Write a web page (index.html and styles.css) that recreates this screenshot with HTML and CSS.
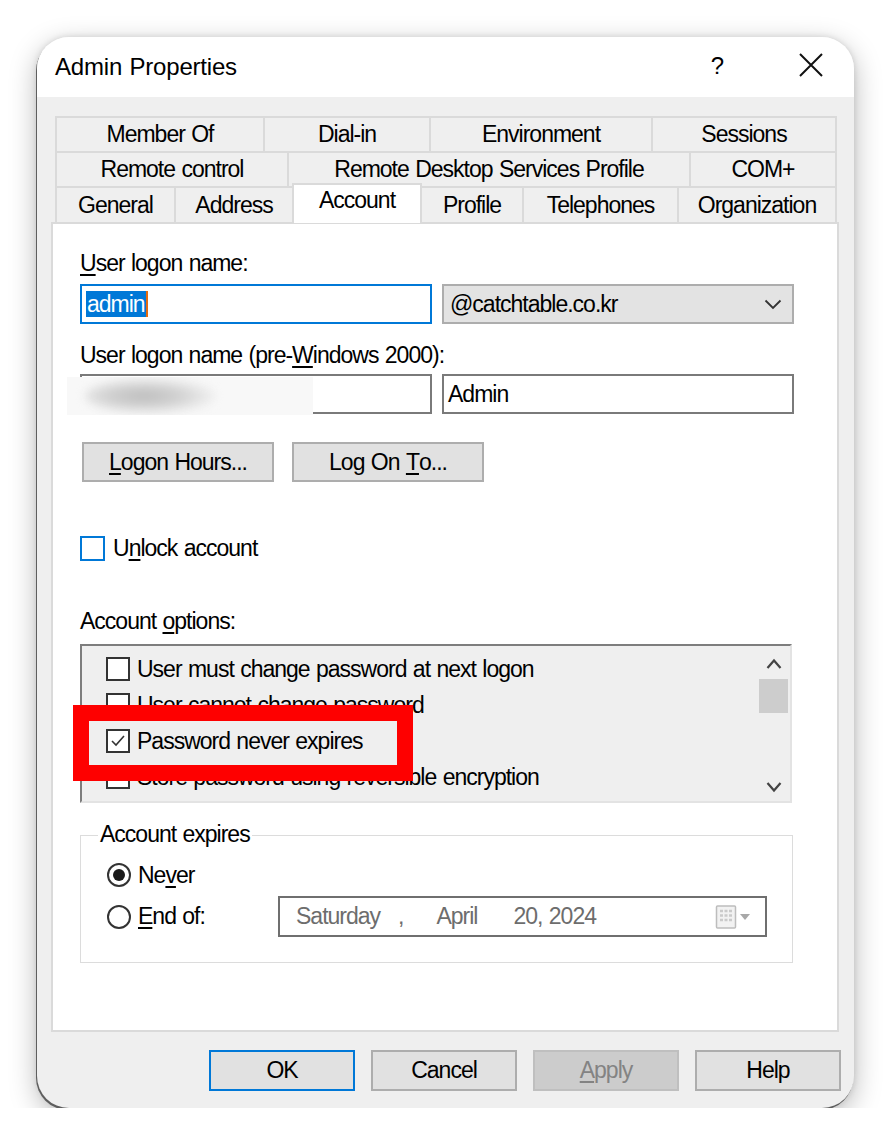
FILE: index.html
```html
<!DOCTYPE html>
<html>
<head>
<meta charset="utf-8">
<link rel="stylesheet" href="styles.css">
</head>
<body>
<div class="page">
  <div class="window">
    <div class="titlebar">
      <span class="title">Admin Properties</span>
      <span class="help-btn">?</span>
      <svg class="close-btn" width="24" height="24" viewBox="0 0 24 24"><path d="M1 1 L23 23 M23 1 L1 23" stroke="#111" stroke-width="2" fill="none"/></svg>
    </div>
    <div class="content">
      <div class="tabs">
        <div class="tab-row">
          <div class="tab" style="width:210px">Member Of</div>
          <div class="tab" style="width:168px">Dial-in</div>
          <div class="tab" style="width:224px">Environment</div>
          <div class="tab" style="width:186px">Sessions</div>
        </div>
        <div class="tab-row">
          <div class="tab" style="width:234px">Remote control</div>
          <div class="tab" style="width:404px">Remote Desktop Services Profile</div>
          <div class="tab" style="width:148px">COM+</div>
        </div>
        <div class="tab-row last">
          <div class="tab" style="width:121px">General</div>
          <div class="tab" style="width:120px">Address</div>
          <div class="tab active" style="width:130px">Account</div>
          <div class="tab" style="width:104px">Profile</div>
          <div class="tab" style="width:157px">Telephones</div>
          <div class="tab" style="width:160px">Organization</div>
        </div>
      </div>
      <div class="panel">
        <div class="label first"><u>U</u>ser logon name:</div>
        <div class="field-row">
          <div class="input focus"><span class="sel">admin</span><span class="caret"></span></div>
          <div class="combo"><span>@catchtable.co.kr</span>
            <svg class="chev" width="18" height="11" viewBox="0 0 18 11"><polyline points="1.5,1.5 9,9 16.5,1.5" stroke="#333" stroke-width="1.8" fill="none"/></svg>
          </div>
        </div>
        <div class="label second">User logon name (pre-<u>W</u>indows 2000):</div>
        <div class="field-row second">
          <div class="input"><div class="blur"><div class="blob"></div></div></div>
          <div class="input"><span class="val">Admin</span></div>
        </div>
        <div class="btn-row">
          <div class="btn"><u>L</u>ogon Hours...</div>
          <div class="btn">Log On&nbsp;<u>T</u>o...</div>
        </div>
        <div class="unlock-row">
          <span class="check blue"></span>
          <span class="unlock-text">U<u>n</u>lock account</span>
        </div>
        <div class="label third">Account <u>o</u>ptions:</div>
        <div class="listbox">
          <div class="items">
            <div class="item"><span class="check"></span><span>User must change password at next logon</span></div>
            <div class="item"><span class="check"></span><span>User cannot change password</span></div>
            <div class="item"><span class="check"><svg width="20" height="20" viewBox="0 0 20 20"><polyline points="4,10 8,14 16,5" stroke="#333" stroke-width="1.6" fill="none"/></svg></span><span>Password never expires</span></div>
            <div class="item"><span class="check"></span><span>Store password using reversible encryption</span></div>
          </div>
          <div class="scrollbar">
            <svg class="arrow" width="16" height="12" viewBox="0 0 16 12"><polyline points="1.5,10 8,2.5 14.5,10" stroke="#444" stroke-width="2.2" fill="none"/></svg>
            <div class="thumb"></div>
            <div class="track"></div>
            <svg class="arrow" width="16" height="12" viewBox="0 0 16 12"><polyline points="1.5,2 8,9.5 14.5,2" stroke="#444" stroke-width="2.2" fill="none"/></svg>
          </div>
          <div class="highlight"></div>
        </div>
        <div class="groupbox">
          <div class="legend">Account expires</div>
          <div class="radio-row">
            <span class="radio on"><span class="dot"></span></span>
            <span>Ne<u>v</u>er</span>
          </div>
          <div class="radio-row second">
            <span class="radio"></span>
            <span class="endof"><u>E</u>nd of:</span>
            <div class="datepicker">
              <span class="d1">Saturday</span>
              <span class="d2">,</span>
              <span class="d3">April</span>
              <span class="d4">20, 2024</span>
              <svg class="cal" width="40" height="26" viewBox="0 0 40 26">
                <rect x="1.5" y="2" width="19" height="22" rx="1" fill="#f2f2f2" stroke="#bdbdbd" stroke-width="1.5"/>
                <path d="M5 7h3M9.5 7h3M14 7h3M5 11.5h3M9.5 11.5h3M14 11.5h3M5 16h3M9.5 16h3M14 16h3" stroke="#cacaca" stroke-width="2.4"/>
                <polygon points="25,10 35,10 30,16" fill="#a8a8a8"/>
              </svg>
            </div>
          </div>
        </div>
      </div>
      <div class="footer">
        <div class="fbtn ok">OK</div>
        <div class="fbtn">Cancel</div>
        <div class="fbtn disabled"><u>A</u>pply</div>
        <div class="fbtn">Help</div>
      </div>
    </div>
  </div>
</div>
</body>
</html>
```

FILE: styles.css
```css
* { box-sizing: border-box; }
html, body { margin: 0; padding: 0; background: #ffffff; }
body {
  font-family: "Liberation Sans", Arial, sans-serif;
  font-size: 23px;
  letter-spacing: -1px;
  word-spacing: 1px;
  color: #000;
}
u { text-decoration: underline; text-underline-offset: 3px; text-decoration-thickness: 1.5px; }

.page { padding: 37px 0 0 37px; }

.window {
  width: 817px;
  height: 1071px;
  border-radius: 32px;
  overflow: hidden;
  background: #efefef;
  box-shadow: -1px 2px 0 #5e5e5e, 0 8px 28px rgba(0,0,0,0.28), 0 0 6px rgba(0,0,0,0.12);
  display: flex;
  flex-direction: column;
}

.titlebar {
  height: 60px;
  background: #fff;
  display: flex;
  align-items: center;
  padding-left: 18px;
  flex-shrink: 0;
}
.title { font-size: 24px; letter-spacing: -0.2px; flex: 1; }
.help-btn { font-size: 24px; letter-spacing: 0; margin-right: 75px; margin-top: -2px; }
.close-btn { margin-right: 31px; margin-top: -4px; }

.content { flex: 1; padding: 19px 15px 0 14px; display: flex; flex-direction: column; }

.tabs { margin-left: 4px; width: 782px; }
.tab-row { display: flex; height: 35px; }
.tab-row.last { height: 36px; }
.tab {
  display: flex;
  align-items: center;
  justify-content: center;
  border: 2px solid #dadada;
  border-bottom: none;
  margin-right: -2px;
  background: #efefef;
  white-space: nowrap;
  flex-shrink: 0;
}
.tab.active {
  background: #fff;
  height: 40px;
  margin-top: -3px;
  position: relative;
  z-index: 2;
  padding-bottom: 8px;
  border-color: #dadada;
}

.panel {
  height: 810px;
  background: #fff;
  border: 2px solid #dadada;
  padding: 0 0 0 27px;
  display: flex;
  flex-direction: column;
  position: relative;
  z-index: 1;
}

.label { height: 26px; line-height: 26px; white-space: nowrap; }
.label.first { margin-top: 26px; }
.label.second { margin-top: 18px; }
.label.third { margin-top: 47px; }

.field-row { display: flex; gap: 10px; margin-top: 8px; height: 40px; }
.field-row.second { margin-top: 6px; }
.input {
  width: 352px;
  height: 40px;
  border: 2px solid #7a7a7a;
  background: #fff;
  display: flex;
  align-items: center;
  padding-left: 4px;
  position: relative;
}
.input.focus { border-color: #0078d7; }
.sel { background: #0078d7; color: #fff; line-height: 26px; padding: 0 1px; }
.caret { width: 2px; height: 26px; background: #e36b10; }

.combo {
  width: 352px;
  height: 40px;
  border: 2px solid #adadad;
  background: #e3e3e3;
  display: flex;
  align-items: center;
  justify-content: space-between;
  padding: 0 10px 0 6px;
}

.blur {
  position: absolute;
  left: -15px;
  top: 1px;
  width: 246px;
  height: 38px;
  background: #f8f8f8;
  overflow: hidden;
}
.blob {
  position: absolute;
  left: 18px;
  top: 1px;
  width: 130px;
  height: 36px;
  border-radius: 50%;
  background: radial-gradient(ellipse at 45% 50%, #bdbdbd 0%, #d0d0d0 35%, #ebebeb 65%, rgba(248,248,248,0) 100%);
  filter: blur(4px);
}

.btn-row { display: flex; gap: 18px; margin-top: 28px; margin-left: 2px; }
.btn {
  width: 192px;
  height: 40px;
  border: 2px solid #adadad;
  background: #e1e1e1;
  display: flex;
  align-items: center;
  justify-content: center;
  white-space: nowrap;
}

.unlock-row { display: flex; align-items: center; margin-top: 54px; height: 25px; }
.unlock-text { margin-left: 8px; }

.check {
  width: 24px;
  height: 24px;
  border: 2px solid #333;
  background: #fff;
  display: inline-flex;
  align-items: center;
  justify-content: center;
  flex-shrink: 0;
}
.check.blue { width: 25px; height: 25px; border-color: #0078d7; }

.listbox {
  margin-top: 10px;
  width: 712px;
  height: 159px;
  background: #efefef;
  border-top: 2px solid #7d7d7d;
  border-left: 2px solid #7d7d7d;
  border-right: 2px solid #e3e3e3;
  border-bottom: 2px solid #e3e3e3;
  display: flex;
  position: relative;
}
.items { flex: 1; padding-top: 5px; padding-left: 24px; overflow: hidden; }
.item { display: flex; align-items: center; height: 36px; white-space: nowrap; }
.item .check { margin-right: 7px; }

.scrollbar {
  width: 33px;
  display: flex;
  flex-direction: column;
  align-items: center;
  padding: 12px 0 8px 0;
}
.thumb { width: 29px; height: 34px; background: #cdcdcd; margin-top: 9px; }
.track { flex: 1; }

.highlight {
  position: absolute;
  left: -9px;
  top: 59px;
  width: 340px;
  height: 76px;
  border: 16px solid #fe0000;
  z-index: 3;
}

.groupbox {
  margin-top: 32px;
  width: 713px;
  height: 128px;
  border: 1px solid #dcdcdc;
  display: flex;
  flex-direction: column;
  padding-left: 26px;
}
.legend {
  margin-top: -15px;
  margin-left: -9px;
  height: 26px;
  line-height: 26px;
  background: #fff;
  align-self: flex-start;
  padding: 0 2px;
}
.radio-row { display: flex; align-items: center; height: 26px; margin-top: 15px; }
.radio-row.second { height: 41px; margin-top: 8px; }
.radio {
  width: 24px;
  height: 24px;
  border-radius: 50%;
  border: 2px solid #333;
  background: #fff;
  display: inline-flex;
  align-items: center;
  justify-content: center;
  margin-right: 7px;
  flex-shrink: 0;
}
.dot { width: 12px; height: 12px; border-radius: 50%; background: #1a1a1a; }
.endof { width: 140px; }

.datepicker {
  width: 489px;
  height: 41px;
  border: 2px solid #6f6f6f;
  display: flex;
  align-items: center;
  color: #6d6d6d;
  padding-left: 16px;
  white-space: nowrap;
}
.d2 { margin-left: 18px; }
.d3 { margin-left: 33px; }
.d4 { margin-left: 36px; }
.cal { margin-left: auto; margin-right: 10px; }

.footer {
  display: flex;
  justify-content: flex-end;
  gap: 16px;
  margin-top: 18px;
  margin-right: -2px;
}
.fbtn {
  width: 146px;
  height: 41px;
  border: 2px solid #adadad;
  background: #e1e1e1;
  display: flex;
  align-items: center;
  justify-content: center;
}
.fbtn.ok { border-color: #0078d7; }
.fbtn.disabled { background: #cccccc; border-color: #bfbfbf; color: #838383; }
```
